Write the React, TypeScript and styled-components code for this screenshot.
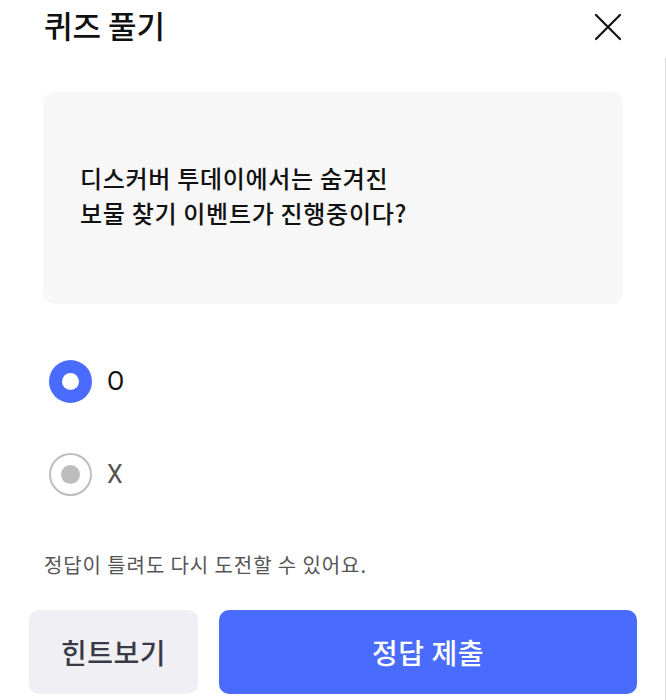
import React, { useState } from 'react';
import styled, { createGlobalStyle } from 'styled-components';

const GlobalStyle = createGlobalStyle`
  html, body {
    margin: 0;
    padding: 0;
    background: #ffffff;
  }

  body {
    font-family: "Noto Sans CJK KR", "Noto Sans", sans-serif;
    color: #111111;
  }
`;

const options = ['O', 'X'];

export default function App() {
  const [selected, setSelected] = useState('O');

  return (
    <>
      <GlobalStyle />
      <Page>
        <Header>
          <Title>퀴즈 풀기</Title>
          <CloseButton type="button" aria-label="닫기">
            <svg width="28" height="28" viewBox="0 0 28 28" fill="none">
              <path d="M2 2L26 26M26 2L2 26" stroke="#111" strokeWidth="2.2" strokeLinecap="round" />
            </svg>
          </CloseButton>
        </Header>
        <Body>
          <Content>
            <QuestionBox>
              <Question>
                디스커버 투데이에서는 숨겨진
                <br />
                보물 찾기 이벤트가 진행중이다?
              </Question>
            </QuestionBox>
            <OptionList>
              {options.map((option) => (
                <OptionRow key={option} onClick={() => setSelected(option)}>
                  <Radio $checked={selected === option} />
                  <OptionLabel $checked={selected === option}>{option}</OptionLabel>
                </OptionRow>
              ))}
            </OptionList>
            <Notice>정답이 틀려도 다시 도전할 수 있어요.</Notice>
          </Content>
          <ButtonRow>
            <HintButton type="button">힌트보기</HintButton>
            <SubmitButton type="button">정답 제출</SubmitButton>
          </ButtonRow>
        </Body>
      </Page>
    </>
  );
}

const Page = styled.div`
  width: 666px;
  height: 700px;
  display: flex;
  flex-direction: column;
  overflow: hidden;
`;

const Header = styled.header`
  display: flex;
  align-items: center;
  justify-content: space-between;
  padding: 0 43px 4px 44px;
  height: 58px;
  box-sizing: border-box;
`;

const Title = styled.h1`
  margin: -5px 0 0;
  font-size: 31px;
  line-height: 40px;
  font-weight: 500;
  color: #111111;
`;

const CloseButton = styled.button`
  padding: 0;
  margin-right: 1px;
  border: none;
  background: none;
  display: flex;
  align-items: center;
  cursor: pointer;
`;

const Body = styled.div`
  flex: 1;
  display: flex;
  flex-direction: column;
  border-right: 1px solid #dcdcdc;
`;

const Content = styled.div`
  padding: 34px 42px 0 43px;
`;

const QuestionBox = styled.div`
  height: 212px;
  box-sizing: border-box;
  padding: 0 37px 7px;
  display: flex;
  align-items: center;
  background: #f7f7f7;
  border-radius: 12px;
`;

const Question = styled.p`
  margin: 0;
  font-size: 24px;
  line-height: 35px;
  font-weight: 500;
  letter-spacing: 0.7px;
  color: #111111;
`;

const OptionList = styled.div`
  display: flex;
  flex-direction: column;
  gap: 50px;
  margin-top: 56px;
  padding-left: 6px;
`;

const OptionRow = styled.label`
  display: flex;
  align-items: center;
  gap: 15px;
  height: 43px;
  cursor: pointer;
`;

const Radio = styled.span<{ $checked: boolean }>`
  width: 43px;
  height: 43px;
  box-sizing: border-box;
  border-radius: 50%;
  display: flex;
  align-items: center;
  justify-content: center;
  background: ${({ $checked }) => ($checked ? '#4a6cfe' : '#ffffff')};
  border: ${({ $checked }) => ($checked ? 'none' : '2px solid #bdbdbd')};

  &::after {
    content: '';
    width: ${({ $checked }) => ($checked ? '17px' : '19px')};
    height: ${({ $checked }) => ($checked ? '17px' : '19px')};
    border-radius: 50%;
    background: ${({ $checked }) => ($checked ? '#ffffff' : '#bdbdbd')};
  }
`;

const OptionLabel = styled.span<{ $checked: boolean }>`
  font-family: Roboto, "Noto Sans", sans-serif;
  font-size: 25px;
  line-height: 30px;
  color: ${({ $checked }) => ($checked ? '#111111' : '#555555')};
`;

const Notice = styled.p`
  margin: 55px 0 0 1px;
  font-size: 20px;
  line-height: 28px;
  color: #555555;
  letter-spacing: 0.9px;
`;

const ButtonRow = styled.div`
  display: flex;
  gap: 21px;
  padding: 31px 28px 0 29px;
`;

const BaseButton = styled.button`
  height: 84px;
  border: none;
  border-radius: 10px;
  font-family: "Noto Sans CJK KR", "Noto Sans", sans-serif;
  font-size: 28px;
  font-weight: 500;
  letter-spacing: 0.5px;
  cursor: pointer;
`;

const HintButton = styled(BaseButton)`
  width: 169px;
  flex: none;
  background: #efeff4;
  color: #3a3a46;
`;

const SubmitButton = styled(BaseButton)`
  flex: 1;
  background: #4a6cfe;
  color: #ffffff;
`;
